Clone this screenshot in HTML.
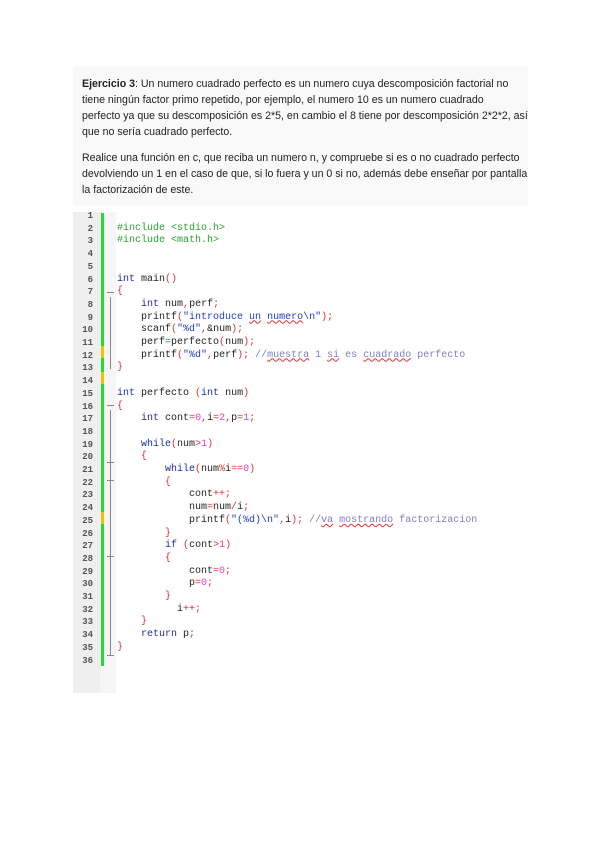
<!DOCTYPE html>
<html><head><meta charset="utf-8"><style>
html,body{margin:0;padding:0;background:#fff;width:600px;height:848px;overflow:hidden;position:relative}
.txt{position:absolute;left:73px;top:66px;width:455px;height:140px;background:#f9f9f9;font-family:"Liberation Sans",sans-serif;font-size:10.6px;color:#222;line-height:16.3px}
.txt p{margin:0;position:absolute;left:9px;white-space:nowrap}
.gut{position:absolute;left:73px;top:212px;width:27px;height:481px;background:#efefef}
.dots{position:absolute;left:100px;top:212px;width:16px;height:481px;background-image:radial-gradient(#ddd 0.6px,transparent 0.7px);background-size:2px 2px}
.bar{position:absolute;left:101px;width:3px;background:#22dd33}
.yb{position:absolute;left:101px;width:3px;height:12px;background:#f2c200}
.ln{position:absolute;left:73px;width:20px;text-align:right;font-family:"Liberation Mono",monospace;font-size:9px;font-weight:bold;color:#555}
.cd{position:absolute;left:117px;font-family:"Liberation Mono",monospace;font-size:10px;color:#222;white-space:pre}
.k{color:#1a2ea0}.p{color:#2aa030}.r{color:#e03030}.m{color:#e040d0}.s{color:#2040c0}.c{color:#8080c0}
.u{text-decoration:underline wavy #e03030}
.fl{position:absolute;left:110px;width:1px;background:#888}
.fm{position:absolute;left:107px;width:7px;height:1px;background:#888}
</style></head><body>
<div class="txt">
<p style="top:10px"><b>Ejercicio 3</b>: Un numero cuadrado perfecto es un numero cuya descomposición factorial no</p>
<p style="top:26px">tiene ningún factor primo repetido, por ejemplo, el numero 10 es un numero cuadrado</p>
<p style="top:42px">perfecto ya que su descomposición es 2*5, en cambio el 8 tiene por descomposición 2*2*2, así</p>
<p style="top:58px">que no sería cuadrado perfecto.</p>
<p style="top:84px">Realice una función en c, que reciba un numero n, y compruebe si es o no cuadrado perfecto</p>
<p style="top:100px">devolviendo un 1 en el caso de que, si lo fuera y un 0 si no, además debe enseñar por pantalla</p>
<p style="top:116px">la factorización de este.</p>
</div>
<div class="gut"></div><div class="dots"></div>
<div class="bar" style="top:213px;height:453px"></div>
<div class="yb" style="top:346px"></div>
<div class="yb" style="top:372px"></div>
<div class="yb" style="top:512px"></div>
<div class="fl" style="top:297px;height:72px"></div>
<div class="fm" style="top:292px"></div>
<div class="fl" style="top:410px;height:245px"></div>
<div class="fm" style="top:405px"></div>
<div class="fm" style="top:462px"></div>
<div class="fm" style="top:480px"></div>
<div class="fm" style="top:556px"></div>
<div class="fm" style="top:655px"></div>
<div id="code"></div>
<script>
var L=[
'',
'<span class="p">#include &lt;stdio.h&gt;</span>',
'<span class="p">#include &lt;math.h&gt;</span>',
'','',
'<span class="k">int</span> main<span class="r">()</span>',
'<span class="r">{</span>',
'    <span class="k">int</span> num<span class="r">,</span>perf<span class="r">;</span>',
'    printf<span class="r">(</span><span class="s">"introduce <span class="u">un</span> <span class="u">numero</span>\\n"</span><span class="r">);</span>',
'    scanf<span class="r">(</span><span class="s">"%d"</span><span class="r">,</span>&amp;num<span class="r">);</span>',
'    perf<span class="r">=</span>perfecto<span class="r">(</span>num<span class="r">);</span>',
'    printf<span class="r">(</span><span class="s">"%d"</span><span class="r">,</span>perf<span class="r">);</span> <span class="c">//<span class="u">muestra</span> 1 <span class="u">si</span> es <span class="u">cuadrado</span> perfecto</span>',
'<span class="r">}</span>',
'',
'<span class="k">int</span> perfecto <span class="r">(</span><span class="k">int</span> num<span class="r">)</span>',
'<span class="r">{</span>',
'    <span class="k">int</span> cont<span class="r">=</span><span class="m">0</span><span class="r">,</span>i<span class="r">=</span><span class="m">2</span><span class="r">,</span>p<span class="r">=</span><span class="m">1</span><span class="r">;</span>',
'',
'    <span class="k">while</span><span class="r">(</span>num<span class="r">&gt;</span><span class="m">1</span><span class="r">)</span>',
'    <span class="r">{</span>',
'        <span class="k">while</span><span class="r">(</span>num<span class="r">%</span>i<span class="r">==</span><span class="m">0</span><span class="r">)</span>',
'        <span class="r">{</span>',
'            cont<span class="r">++;</span>',
'            num<span class="r">=</span>num<span class="r">/</span>i<span class="r">;</span>',
'            printf<span class="r">(</span><span class="s">"(%d)\\n"</span><span class="r">,</span>i<span class="r">);</span> <span class="c">//<span class="u">va</span> <span class="u">mostrando</span> factorizacion</span>',
'        <span class="r">}</span>',
'        <span class="k">if</span> <span class="r">(</span>cont<span class="r">&gt;</span><span class="m">1</span><span class="r">)</span>',
'        <span class="r">{</span>',
'            cont<span class="r">=</span><span class="m">0</span><span class="r">;</span>',
'            p<span class="r">=</span><span class="m">0</span><span class="r">;</span>',
'        <span class="r">}</span>',
'          i<span class="r">++;</span>',
'    <span class="r">}</span>',
'    <span class="k">return</span> p<span class="r">;</span>',
'<span class="r">}</span>',
''];
var h='';
for(var i=0;i<36;i++){var y=210+i*12.7;
h+='<div class="ln" style="top:'+(y+1)+'px">'+(i+1)+'</div><div class="cd" style="top:'+y+'px">'+L[i]+'</div>';}
document.getElementById('code').innerHTML=h;
</script>
</body></html>
